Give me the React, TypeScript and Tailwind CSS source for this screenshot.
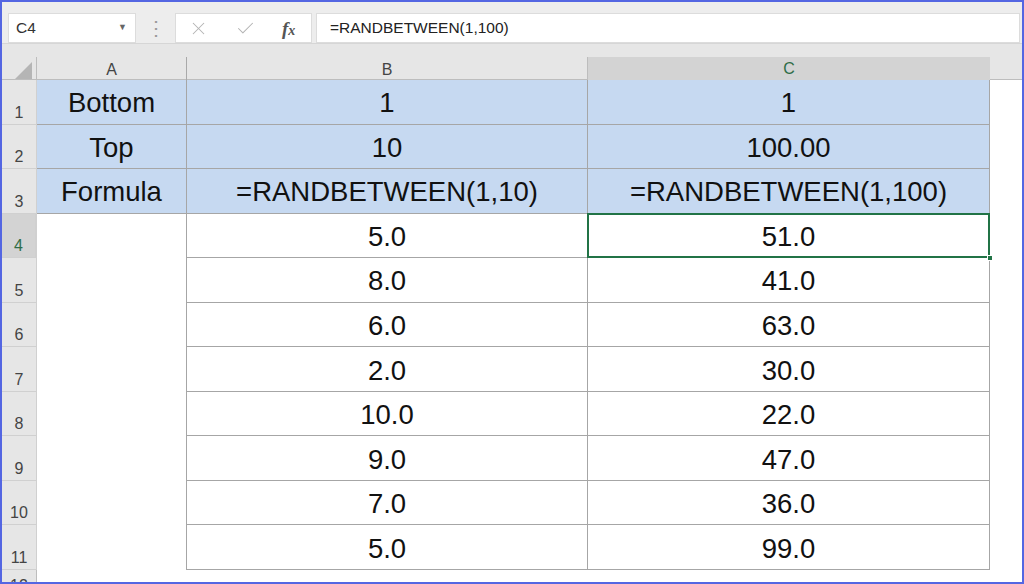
import { X, Check } from "lucide-react";

const rows = [
  { n: 1, a: "Bottom", b: "1", c: "1", head: true },
  { n: 2, a: "Top", b: "10", c: "100.00", head: true },
  { n: 3, a: "Formula", b: "=RANDBETWEEN(1,10)", c: "=RANDBETWEEN(1,100)", head: true },
  { n: 4, a: "", b: "5.0", c: "51.0" },
  { n: 5, a: "", b: "8.0", c: "41.0" },
  { n: 6, a: "", b: "6.0", c: "63.0" },
  { n: 7, a: "", b: "2.0", c: "30.0" },
  { n: 8, a: "", b: "10.0", c: "22.0" },
  { n: 9, a: "", b: "9.0", c: "47.0" },
  { n: 10, a: "", b: "7.0", c: "36.0" },
  { n: 11, a: "", b: "5.0", c: "99.0" },
];

const cols = "grid-cols-[35px_150px_401px_402px_1fr]";

export default function App() {
  return (
    <div className="w-[1024px] h-[584px] overflow-hidden border-2 border-[#5466e2] bg-white font-['Liberation_Sans',Arial,sans-serif]">
      {/* formula bar */}
      <div className="h-[42px] bg-[#ededed] border-b border-[#d6d6d6] flex items-end pl-[6px] pr-[2px]">
        <div className="h-[30px] w-[128px] bg-white border border-[#dcdcdc] flex items-center justify-between pl-[7px] pr-2">
          <span className="text-[15.5px] text-[#333]">C4</span>
          <span className="text-[9px] text-[#666]">▼</span>
        </div>
        <div className="w-[39px] h-[30px] flex items-center justify-center text-[#9a9a9a] text-[20px] leading-none">
          ⋮
        </div>
        <div className="h-[30px] w-[137px] bg-white border border-[#dcdcdc] flex items-center pl-[12px] gap-[26px]">
          <X size={21} strokeWidth={1.2} className="text-[#b3b3b3]" />
          <Check size={21} strokeWidth={1.2} className="text-[#b3b3b3]" />
          <span className="font-['Liberation_Serif',serif] italic text-[19px] text-[#555] font-semibold leading-none">
            f<span className="text-[14px]">x</span>
          </span>
        </div>
        <div className="ml-[4px] h-[30px] flex-1 bg-white border border-[#dcdcdc] flex items-center pl-[13px]">
          <span className="text-[15.5px] text-[#222]">=RANDBETWEEN(1,100)</span>
        </div>
      </div>

      {/* spacer */}
      <div className="h-[13px] bg-[#e6e6e6]" />

      {/* column headers */}
      <div className={`grid ${cols} h-[23px] bg-[#e6e6e6] border-b border-[#bdbdbd] text-[16px] text-[#444]`}>
        <div className="flex items-end justify-end pr-[4px] pb-[3px] border-r border-[#bdbdbd]">
          <svg width="17" height="17" viewBox="0 0 17 17">
            <polygon points="17,0 17,17 0,17" fill="#b5b5b5" />
          </svg>
        </div>
        <div className="flex items-center justify-center border-r border-[#a9a9a9]">A</div>
        <div className="flex items-center justify-center border-r border-[#bdbdbd]">B</div>
        <div className="flex items-center justify-center bg-[#d3d3d3] border-b-2 border-[#217346] -mb-px text-[#2f6d47]">
          C
        </div>
        <div />
      </div>

      {/* rows */}
      {rows.map((r) => {
        const sel = r.n === 4;
        const fill = r.head ? "bg-[#c6d9f1]" : "bg-white";
        return (
          <div key={r.n} className={`grid ${cols} h-[44.55px] text-[27.5px] leading-[34px] text-[#111]`}>
            <div
              className={`flex items-end justify-center pb-[1px] text-[16px] leading-[20px] ${
                sel
                  ? "bg-[#d3d3d3] text-[#2f6d47] border-r-2 border-[#217346]"
                  : "bg-[#e6e6e6] text-[#444] border-r border-[#bdbdbd]"
              } border-b border-[#d0d0d0]`}
            >
              {r.n}
            </div>
            <div
              className={`flex items-center justify-center pt-[3px] ${fill} ${
                r.head ? "border-b border-r border-[#a6a6a6]" : "border-r border-[#a6a6a6]"
              }`}
            >
              {r.a}
            </div>
            <div className={`flex items-center justify-center pt-[3px] ${fill} border-b border-r border-[#a6a6a6]`}>
              {r.b}
            </div>
            <div className={`relative flex items-center justify-center pt-[3px] ${fill} border-b border-r border-[#a6a6a6]`}>
              {r.c}
              {sel && (
                <>
                  <div className="absolute z-10 -top-px -left-px -right-px -bottom-px border-2 border-[#217346]" />
                  <div className="absolute z-10 -right-[4px] -bottom-[4px] w-[6px] h-[6px] bg-[#217346] border border-white" />
                </>
              )}
            </div>
            <div className="bg-white" />
          </div>
        );
      })}
      <div className={`grid ${cols} h-[44px]`}>
        <div className="flex items-start justify-center pt-[4px] text-[16px] text-[#444] bg-[#e6e6e6] border-r border-[#bdbdbd]">
          12
        </div>
      </div>
    </div>
  );
}
